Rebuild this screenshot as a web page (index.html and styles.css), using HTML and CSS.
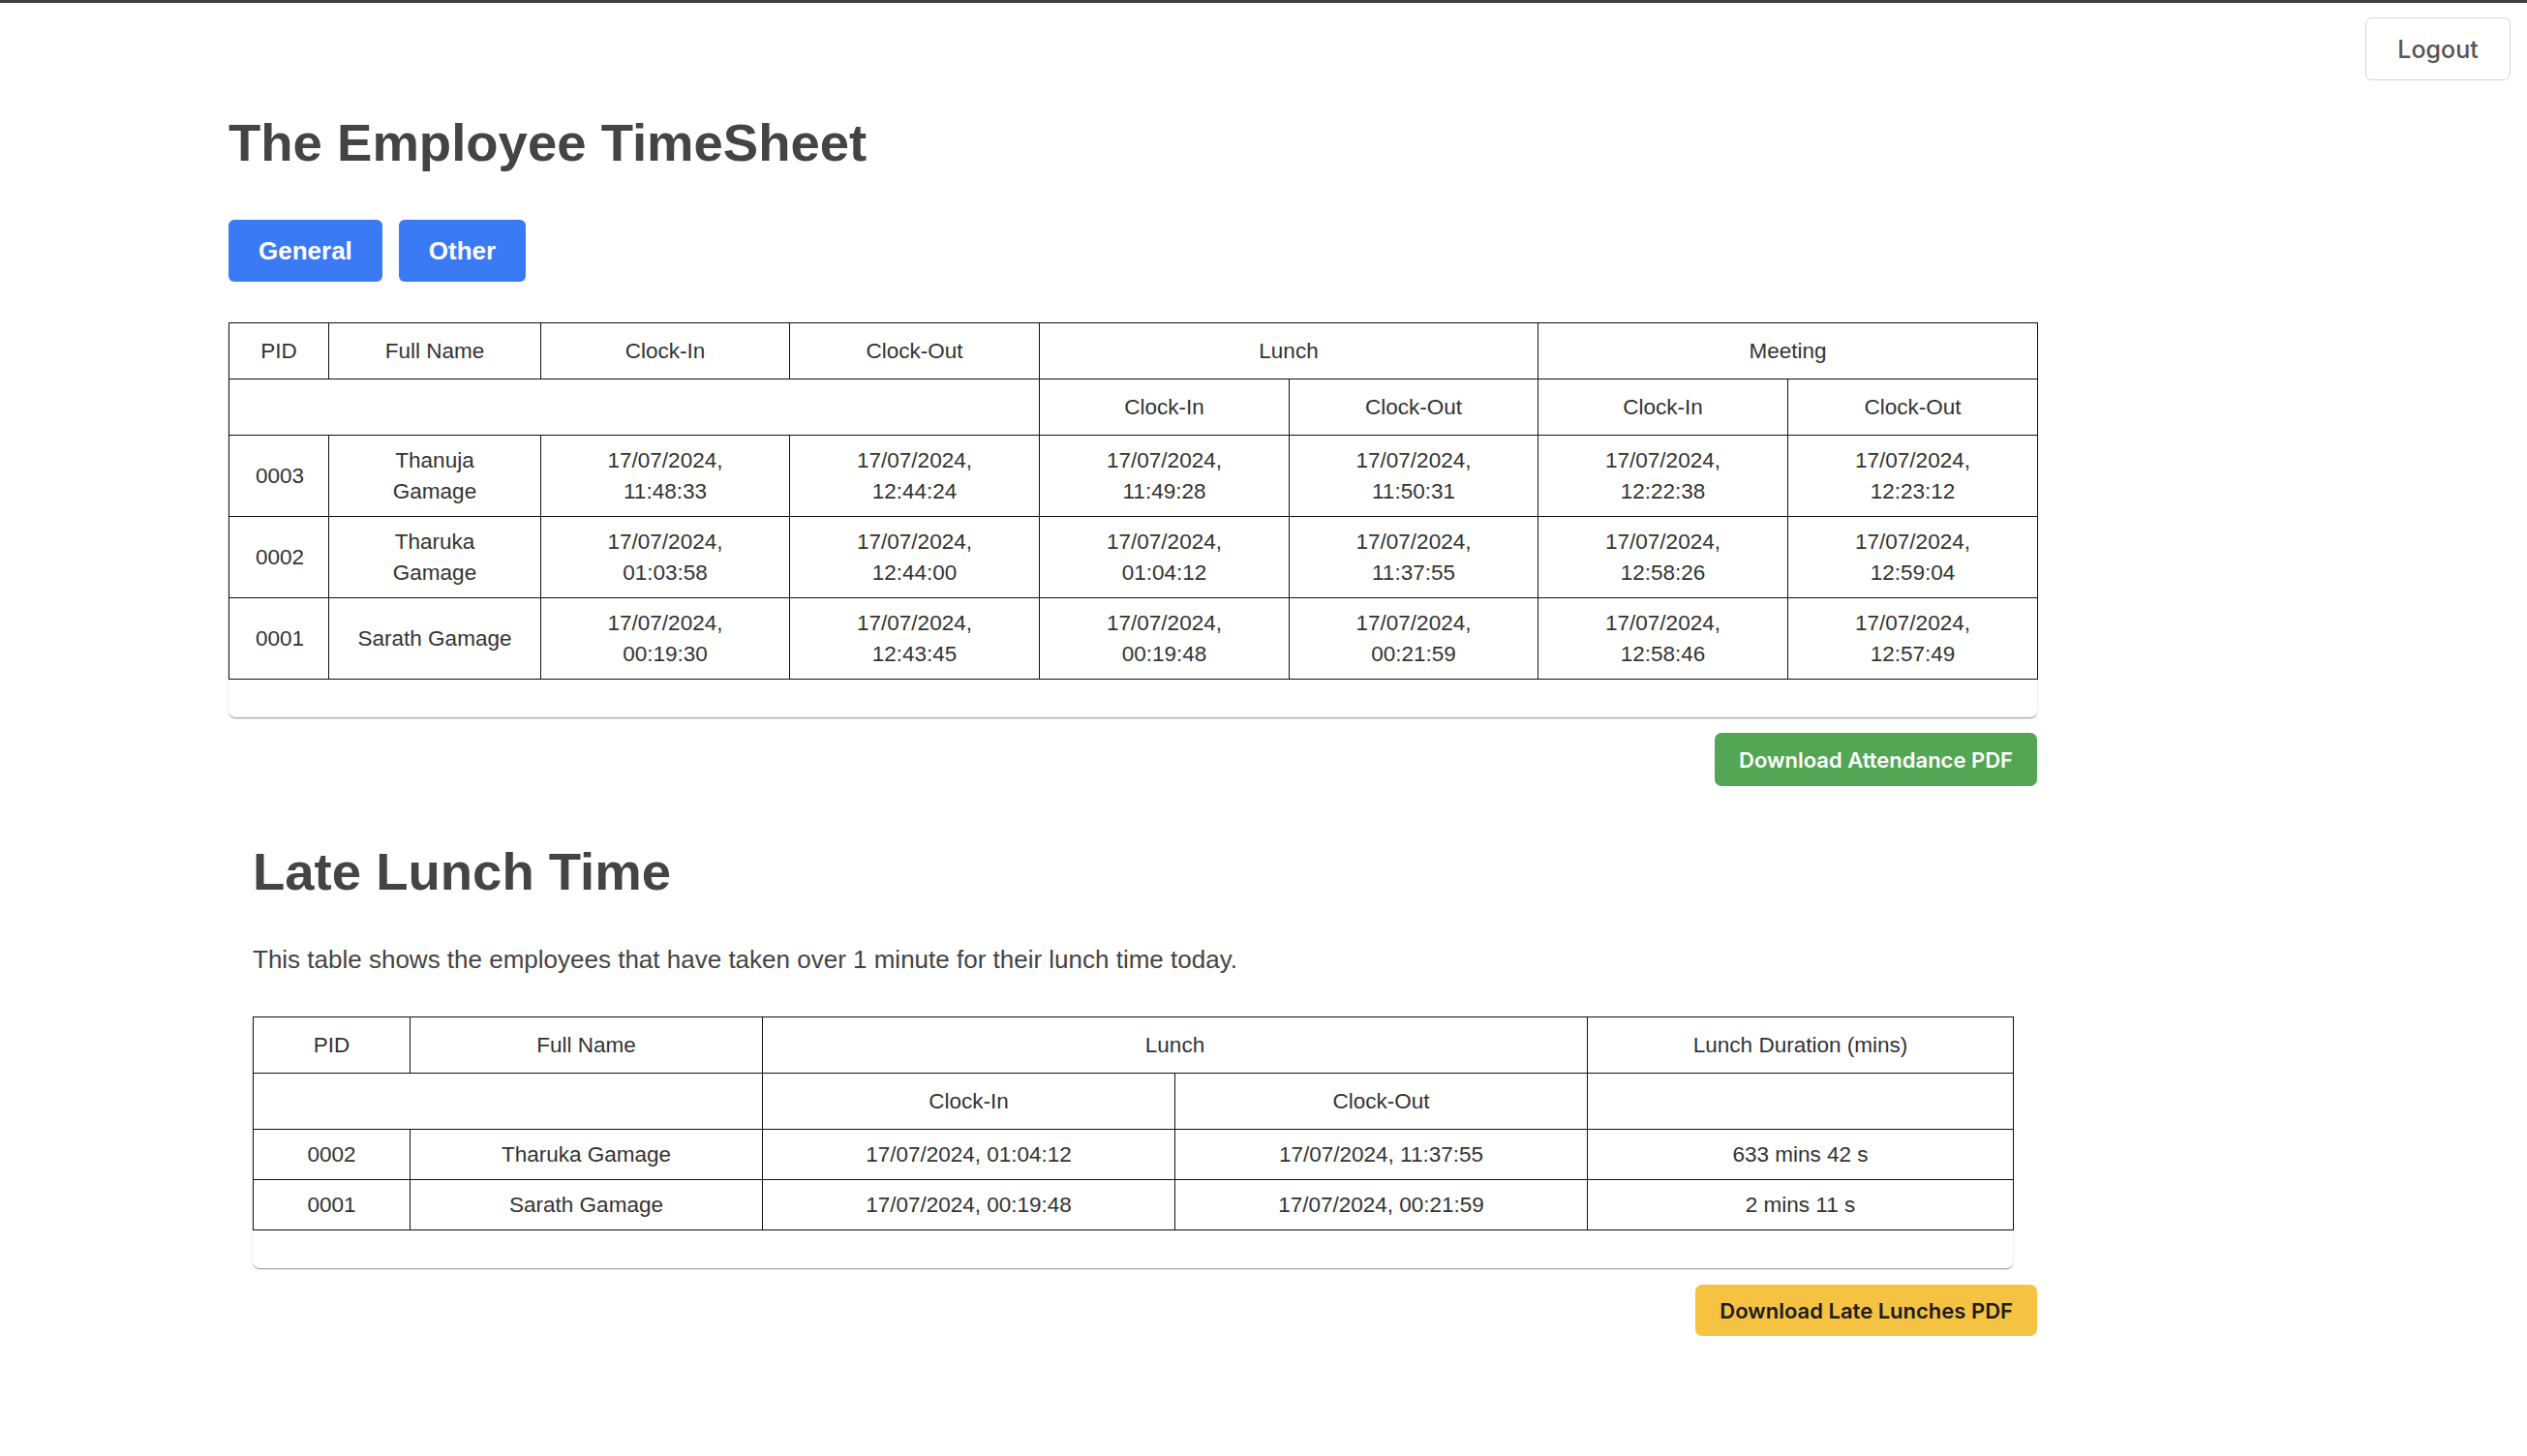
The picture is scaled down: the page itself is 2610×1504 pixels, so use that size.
FILE: index.html
```html
<!DOCTYPE html>
<html lang="en">
<head>
<meta charset="utf-8">
<title>The Employee TimeSheet</title>
<link rel="stylesheet" href="styles.css">
</head>
<body>
<div class="topbar"></div>
<header class="header">
  <button class="logout">Logout</button>
</header>
<main class="page">
  <h1 class="title">The Employee TimeSheet</h1>
  <div class="tabs">
    <button class="tab">General</button>
    <button class="tab">Other</button>
  </div>

  <div class="card">
    <table class="grid">
      <colgroup>
        <col class="w103"><col class="w219"><col class="w257"><col class="w258">
        <col class="w258"><col class="w257"><col class="w258"><col class="w258">
      </colgroup>
      <thead>
        <tr>
          <th>PID</th><th>Full Name</th><th>Clock-In</th><th>Clock-Out</th>
          <th colspan="2">Lunch</th><th colspan="2">Meeting</th>
        </tr>
        <tr>
          <th colspan="4"></th>
          <th>Clock-In</th><th>Clock-Out</th><th>Clock-In</th><th>Clock-Out</th>
        </tr>
      </thead>
      <tbody>
        <tr>
          <td>0003</td><td>Thanuja Gamage</td>
          <td>17/07/2024, 11:48:33</td><td>17/07/2024, 12:44:24</td>
          <td>17/07/2024, 11:49:28</td><td>17/07/2024, 11:50:31</td>
          <td>17/07/2024, 12:22:38</td><td>17/07/2024, 12:23:12</td>
        </tr>
        <tr>
          <td>0002</td><td>Tharuka Gamage</td>
          <td>17/07/2024, 01:03:58</td><td>17/07/2024, 12:44:00</td>
          <td>17/07/2024, 01:04:12</td><td>17/07/2024, 11:37:55</td>
          <td>17/07/2024, 12:58:26</td><td>17/07/2024, 12:59:04</td>
        </tr>
        <tr>
          <td>0001</td><td>Sarath Gamage</td>
          <td>17/07/2024, 00:19:30</td><td>17/07/2024, 12:43:45</td>
          <td>17/07/2024, 00:19:48</td><td>17/07/2024, 00:21:59</td>
          <td>17/07/2024, 12:58:46</td><td>17/07/2024, 12:57:49</td>
        </tr>
      </tbody>
    </table>
  </div>
  <div class="actions">
    <button class="btn btn-green">Download Attendance PDF</button>
  </div>

  <section class="late">
    <h2 class="title">Late Lunch Time</h2>
    <p class="desc">This table shows the employees that have taken over 1 minute for their lunch time today.</p>
    <div class="card">
      <table class="grid">
        <colgroup>
          <col class="w162"><col class="w364"><col class="w426"><col class="w426"><col class="w440">
        </colgroup>
        <thead>
          <tr>
            <th>PID</th><th>Full Name</th><th colspan="2">Lunch</th><th>Lunch Duration (mins)</th>
          </tr>
          <tr>
            <th colspan="2"></th><th>Clock-In</th><th>Clock-Out</th><th></th>
          </tr>
        </thead>
        <tbody>
          <tr>
            <td>0002</td><td>Tharuka Gamage</td><td>17/07/2024, 01:04:12</td><td>17/07/2024, 11:37:55</td><td>633 mins 42 s</td>
          </tr>
          <tr>
            <td>0001</td><td>Sarath Gamage</td><td>17/07/2024, 00:19:48</td><td>17/07/2024, 00:21:59</td><td>2 mins 11 s</td>
          </tr>
        </tbody>
      </table>
    </div>
  </section>
  <div class="actions">
    <button class="btn btn-yellow">Download Late Lunches PDF</button>
  </div>
</main>
</body>
</html>
```
FILE: styles.css
```css
* { box-sizing: border-box; }

body {
  margin: 0;
  background: #ffffff;
  font-family: "Liberation Sans", Arial, Helvetica, sans-serif;
  color: #333333;
}

.topbar {
  height: 3px;
  background: #3d4043;
}

.header {
  display: flex;
  justify-content: flex-end;
  padding: 15px 17px 0 0;
}

.logout {
  width: 150px;
  height: 65px;
  background: #ffffff;
  border: 1.5px solid #d4d4d4;
  border-radius: 7px;
  font-family: Inter, "Noto Sans", sans-serif;
  font-weight: 500;
  font-size: 25px;
  color: #555555;
  padding: 0;
  cursor: pointer;
}

.page {
  width: 1868px;
  margin-left: 236px;
}

.title {
  margin: 0;
  font-size: 54.5px;
  line-height: 65px;
  font-weight: 700;
  color: #444444;
}

h1.title { margin-top: 32px; }

.tabs {
  display: flex;
  gap: 17px;
  margin-top: 47px;
}

.tab {
  height: 64px;
  padding: 0 31px;
  border: none;
  border-radius: 6px;
  background: #3a7af4;
  color: #ffffff;
  font-family: "Liberation Sans", Arial, sans-serif;
  font-weight: 700;
  font-size: 26px;
  cursor: pointer;
}

.card {
  margin-top: 42px;
  background: #ffffff;
  border-radius: 7px;
  padding-bottom: 39px;
  box-shadow: 0 2px 1px -1px rgba(0,0,0,0.22), 0 1px 1px 0 rgba(0,0,0,0.16), 0 1px 3px 0 rgba(0,0,0,0.12);
}

.grid {
  width: 100%;
  table-layout: fixed;
  border-collapse: collapse;
  font-size: 22.5px;
  line-height: 32px;
  color: #333333;
}

.grid th,
.grid td {
  border: 1px solid #111111;
  text-align: center;
  font-weight: 400;
}

.grid th { padding: 12.5px 8px; }
.grid td { padding: 9.5px 27px; }

.w103 { width: 103px; }
.w219 { width: 219px; }
.w257 { width: 257px; }
.w258 { width: 258px; }
.w162 { width: 162px; }
.w364 { width: 364px; }
.w426 { width: 426px; }
.w440 { width: 440px; }

.actions {
  display: flex;
  justify-content: flex-end;
  margin-top: 16px;
}

.btn {
  height: 55px;
  padding: 0 25px;
  border: none;
  border-radius: 7px;
  font-family: Inter, "Noto Sans", sans-serif;
  font-weight: 600;
  font-size: 22px;
  cursor: pointer;
}

.btn-green {
  background: #53a653;
  color: #ffffff;
}

.btn-yellow {
  height: 53px;
  background: #f5c242;
  color: #1c1c1c;
}

.late {
  padding: 0 25px;
  margin-top: 56px;
}

.desc {
  margin: 38.5px 0 0;
  font-size: 26px;
  line-height: 39px;
  color: #444444;
}

.late .card { margin-top: 39.5px; }

.late + .actions { margin-top: 17px; }
```
